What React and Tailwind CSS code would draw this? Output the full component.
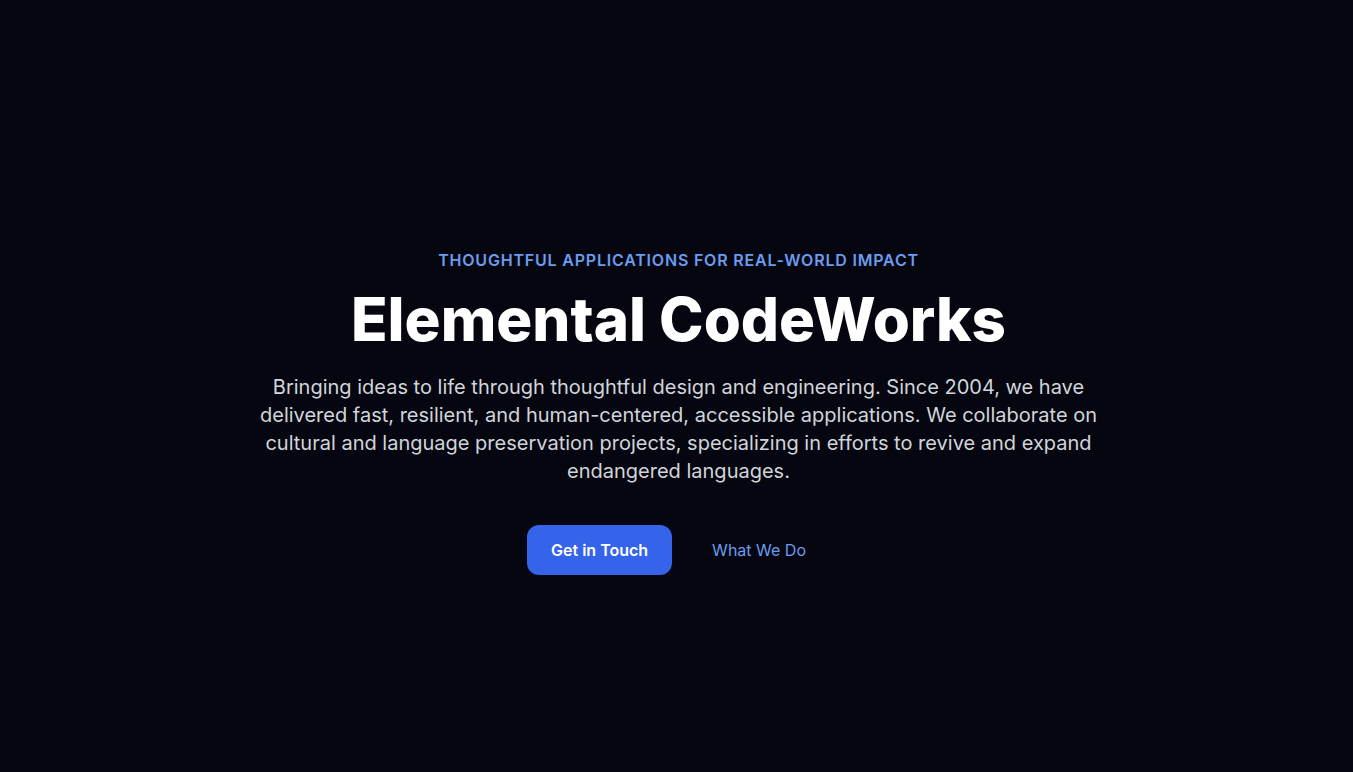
export default function App() {
  return (
    <div className="min-h-screen bg-[#05060f] flex items-center justify-center px-6" style={{ fontFamily: 'Inter, "Noto Sans", sans-serif' }}>
      <div className="ml-1 flex flex-col items-center text-center pt-[50px]">
        <p className="text-base font-semibold uppercase tracking-wider text-[#6b9cf0]">
          Thoughtful applications for real-world impact
        </p>
        <h1 className="mt-[17px] text-6xl font-extrabold text-white">
          Elemental CodeWorks
        </h1>
        <p className="mt-6 max-w-4xl text-xl leading-7 text-[#d1d5db]">
          Bringing ideas to life through thoughtful design and engineering. Since 2004, we have delivered fast, resilient, and human-centered, accessible applications. We collaborate on cultural and language preservation projects, specializing in efforts to revive and expand endangered languages.
        </p>
        <div className="mt-10 flex items-center gap-4">
          <button className="h-[50px] px-6 rounded-xl bg-[#3563e9] text-white font-semibold text-base">
            Get in Touch
          </button>
          <a href="#" className="px-6 py-3 text-base text-[#6b9cf0]">
            What We Do
          </a>
        </div>
      </div>
    </div>
  );
}
